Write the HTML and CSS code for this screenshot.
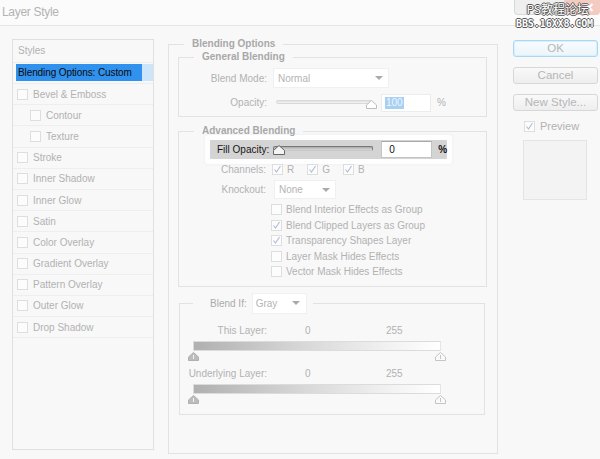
FILE: index.html
```html
<!DOCTYPE html>
<html>
<head>
<meta charset="utf-8">
<link rel="stylesheet" href="styles.css">
</head>
<body>
<div class="window">
  <div class="titlebar">
    <span class="title">Layer Style</span>
    <div class="winbtns">
      <span class="wb wb-help"></span>
      <span class="wb wb-close"><svg width="10" height="9" viewBox="0 0 10 9"><path d="M1.5 1 L8.5 8 M8.5 1 L1.5 8" stroke="#fff" stroke-width="2"/></svg></span>
    </div>
    <div class="watermark"><div class="wm1">PS教程论坛</div><div class="wm2">BBS.16XX8.COM</div></div>
  </div>
  <div class="dialog">
    <div class="styles-panel">
      <div class="list-head">Styles</div>
      <div class="list-sel"><span class="sel-blue">Blending Options: Custom</span><span class="sel-light"></span></div>
      <div class="list-row"><span class="cb"></span>Bevel &amp; Emboss</div>
      <div class="list-row sub"><span class="cb"></span>Contour</div>
      <div class="list-row sub"><span class="cb"></span>Texture</div>
      <div class="list-row"><span class="cb"></span>Stroke</div>
      <div class="list-row"><span class="cb"></span>Inner Shadow</div>
      <div class="list-row"><span class="cb"></span>Inner Glow</div>
      <div class="list-row"><span class="cb"></span>Satin</div>
      <div class="list-row"><span class="cb"></span>Color Overlay</div>
      <div class="list-row"><span class="cb"></span>Gradient Overlay</div>
      <div class="list-row"><span class="cb"></span>Pattern Overlay</div>
      <div class="list-row"><span class="cb"></span>Outer Glow</div>
      <div class="list-row"><span class="cb"></span>Drop Shadow</div>
    </div>

    <fieldset class="group main">
      <legend class="lg-main">Blending Options</legend>

      <fieldset class="group gen">
        <legend class="lg-sub">General Blending</legend>
        <div class="frow r-mode">
          <span class="flabel">Blend Mode:</span>
          <span class="select sel-mode">Normal<span class="arrow"></span></span>
        </div>
        <div class="frow r-opac">
          <span class="flabel">Opacity:</span>
          <span class="slider s-opac">
            <span class="track"></span>
            <svg class="thumb" width="11" height="9" viewBox="0 0 11 9"><path d="M5.5 0.5 L10.5 5 V8.5 H0.5 V5 Z" fill="#fff" stroke="#bdbdbd"/></svg>
          </span>
          <span class="input in-opac"><span class="hl">100</span></span>
          <span class="pct">%</span>
        </div>
      </fieldset>

      <fieldset class="group adv">
        <legend class="lg-sub">Advanced Blending</legend>
        <div class="fill-strip">
          <span class="fill-label">Fill Opacity:</span>
          <span class="slider s-fill">
            <span class="track dark"></span>
            <svg class="thumb" width="12" height="10" viewBox="0 0 12 10"><path d="M6 0.5 L11.5 5.5 V9.5 H0.5 V5.5 Z" fill="#f4f4f4" stroke="#666"/></svg>
          </span>
          <span class="input in-fill">0</span>
          <span class="pct dark">%</span>
        </div>
        <div class="frow r-chan">
          <span class="flabel">Channels:</span>
          <span class="cb on chan-first"><svg width="9" height="9" viewBox="0 0 9 9"><path d="M1.5 4.5 L3.5 7 L7.5 1" fill="none" stroke="#b1c0d6" stroke-width="1.2"/></svg></span><span class="chan-l">R</span>
          <span class="cb on"><svg width="9" height="9" viewBox="0 0 9 9"><path d="M1.5 4.5 L3.5 7 L7.5 1" fill="none" stroke="#b1c0d6" stroke-width="1.2"/></svg></span><span class="chan-l">G</span>
          <span class="cb on"><svg width="9" height="9" viewBox="0 0 9 9"><path d="M1.5 4.5 L3.5 7 L7.5 1" fill="none" stroke="#b1c0d6" stroke-width="1.2"/></svg></span><span class="chan-l">B</span>
        </div>
        <div class="frow r-knock">
          <span class="flabel">Knockout:</span>
          <span class="select sel-knock">None<span class="arrow"></span></span>
        </div>
        <div class="checklist">
          <div class="crow"><span class="cb"></span>Blend Interior Effects as Group</div>
          <div class="crow"><span class="cb on"><svg width="9" height="9" viewBox="0 0 9 9"><path d="M1.5 4.5 L3.5 7 L7.5 1" fill="none" stroke="#b1c0d6" stroke-width="1.2"/></svg></span>Blend Clipped Layers as Group</div>
          <div class="crow"><span class="cb on"><svg width="9" height="9" viewBox="0 0 9 9"><path d="M1.5 4.5 L3.5 7 L7.5 1" fill="none" stroke="#b1c0d6" stroke-width="1.2"/></svg></span>Transparency Shapes Layer</div>
          <div class="crow"><span class="cb"></span>Layer Mask Hides Effects</div>
          <div class="crow"><span class="cb"></span>Vector Mask Hides Effects</div>
        </div>
      </fieldset>

      <fieldset class="group blendif">
        <legend class="lg-if"><span>Blend If:</span><span class="select sel-gray">Gray<span class="arrow"></span></span></legend>
        <div class="brow first">
          <span class="blabel">This Layer:</span><span class="bv0">0</span><span>255</span>
        </div>
        <div class="gbar"></div>
        <div class="thumbs">
          <svg width="11" height="9" viewBox="0 0 11 9"><path d="M5.5 0.5 L10.5 5 V8.5 H0.5 V5 Z" fill="#bcbcbc" stroke="#b0b0b0"/><path d="M5.5 3 V7" stroke="#f2f2f2"/></svg>
          <svg width="11" height="9" viewBox="0 0 11 9"><path d="M5.5 0.5 L10.5 5 V8.5 H0.5 V5 Z" fill="#fafafa" stroke="#c4c4c4"/><path d="M5.5 3 V7" stroke="#c4c4c4"/></svg>
        </div>
        <div class="brow">
          <span class="blabel">Underlying Layer:</span><span class="bv0">0</span><span>255</span>
        </div>
        <div class="gbar"></div>
        <div class="thumbs">
          <svg width="11" height="9" viewBox="0 0 11 9"><path d="M5.5 0.5 L10.5 5 V8.5 H0.5 V5 Z" fill="#bcbcbc" stroke="#b0b0b0"/><path d="M5.5 3 V7" stroke="#f2f2f2"/></svg>
          <svg width="11" height="9" viewBox="0 0 11 9"><path d="M5.5 0.5 L10.5 5 V8.5 H0.5 V5 Z" fill="#fafafa" stroke="#c4c4c4"/><path d="M5.5 3 V7" stroke="#c4c4c4"/></svg>
        </div>
      </fieldset>
    </fieldset>

    <div class="actions">
      <div class="btn btn-ok">OK</div>
      <div class="btn">Cancel</div>
      <div class="btn">New Style...</div>
      <div class="preview-row"><span class="cb on"><svg width="9" height="9" viewBox="0 0 9 9"><path d="M1.5 4.5 L3.5 7 L7.5 1" fill="none" stroke="#b1c0d6" stroke-width="1.2"/></svg></span>Preview</div>
      <div class="swatch"></div>
    </div>
  </div>
</div>
</body>
</html>
```

FILE: styles.css
```css
html, body {
  margin: 0;
  padding: 0;
}
body {
  width: 600px;
  height: 459px;
  overflow: hidden;
  background: #f8f8f8;
  font-family: "Liberation Sans", Arial, sans-serif;
  font-size: 10px;
  color: #b2b2b2;
}
.window {
  width: 600px;
  height: 459px;
}

/* title bar */
.titlebar {
  position: relative;
  height: 25px;
  border-bottom: 1px solid #e6e6e6;
  background: #fbfbfb;
  display: flex;
  align-items: flex-start;
}
.title {
  font-size: 12px;
  color: #b3b3b3;
  padding: 5px 0 0 2px;
  letter-spacing: -0.3px;
}
.winbtns {
  margin-left: auto;
  display: flex;
}
.wb {
  height: 15px;
  box-sizing: border-box;
}
.wb-help {
  width: 51px;
  border: 1px solid #d8d8d8;
  border-top: none;
  border-radius: 0 0 0 4px;
  background: #efefef;
}
.wb-close {
  width: 35px;
  background: #f3cbc1;
  display: flex;
  align-items: center;
  justify-content: flex-end;
  padding-right: 6px;
  border-radius: 0 0 4px 0;
}
.watermark {
  position: absolute;
  top: 2px;
  right: 8px;
  text-align: right;
  color: #fff;
  text-shadow: 1px 0 0 #555, -1px 0 0 #555, 0 1px 0 #555, 0 -1px 0 #555;
}
.wm1 {
  font-family: "Noto Sans CJK SC", sans-serif;
  font-size: 12px;
  line-height: 14px;
  height: 14px;
  margin-right: 3px;
}
.wm2 {
  margin-top: 3px;
  font-family: "DejaVu Sans Mono", monospace;
  font-size: 10px;
  line-height: 9px;
  height: 9px;
  font-weight: bold;
  letter-spacing: -0.1px;
  margin-right: -1px;
}

/* dialog body */
.dialog {
  display: flex;
  align-items: flex-start;
}

/* styles list */
.styles-panel {
  box-sizing: border-box;
  width: 142px;
  height: 411px;
  margin: 13px 0 0 12px;
  border: 1px solid #e0e0e0;
  background: #f8f8f8;
}
.list-head {
  height: 23px;
  line-height: 22px;
  padding-left: 5px;
  border-bottom: 1px solid #eeeeee;
  box-sizing: border-box;
}
.list-sel {
  height: 21px;
  box-sizing: border-box;
  padding: 1px 0 2px 3px;
  display: flex;
  border-bottom: 1px solid #eeeeee;
}
.sel-blue {
  width: 126px;
  background: #3192ee;
  color: #0a0a0a;
  line-height: 18px;
  padding-left: 2px;
  box-sizing: border-box;
  white-space: nowrap;
  letter-spacing: -0.1px;
}
.sel-light {
  flex: 1;
  background: #cde5fb;
}
.list-row {
  height: 21.2px;
  box-sizing: border-box;
  border-bottom: 1px solid #eeeeee;
  display: flex;
  align-items: center;
  padding-left: 4px;
  white-space: nowrap;
}
.list-row.sub {
  padding-left: 17px;
}
.list-row .cb {
  margin-right: 5px;
}

/* checkboxes */
.cb {
  display: inline-flex;
  align-items: center;
  justify-content: center;
  width: 11px;
  height: 11px;
  box-sizing: border-box;
  border: 1px solid #dedede;
  background: #fcfcfc;
  flex: none;
}

/* fieldsets */
.group {
  margin: 0;
  padding: 0;
  border: 1px solid #e2e2e2;
  min-width: 0;
  box-sizing: border-box;
}
.group legend {
  line-height: 12px;
  padding: 0 8px;
}
.lg-main, .lg-sub {
  font-weight: bold;
  color: #a8a8a8;
}
.main {
  width: 330px;
  height: 416px;
  margin: 12px 0 0 14px;
  padding: 0 10px 0 9px;
}
.lg-main {
  margin-left: 6px;
}
.lg-sub {
  margin-left: 15px;
}
.gen {
  margin-top: 1px;
  padding: 5px 0 4px 0;
}
.frow {
  display: flex;
  align-items: center;
}
.flabel {
  width: 88px;
  text-align: right;
  flex: none;
  white-space: nowrap;
}
.r-mode {
  height: 20px;
}
.select {
  position: relative;
  display: flex;
  align-items: center;
  box-sizing: border-box;
  background: #fff;
  border: 1px solid #f0f0f0;
  padding-left: 4px;
  color: #b4b4b4;
}
.arrow {
  position: absolute;
  top: 50%;
  margin-top: -2px;
  width: 0;
  height: 0;
  border-left: 4px solid transparent;
  border-right: 4px solid transparent;
  border-top: 4px solid #aaaaaa;
}
.sel-mode {
  margin-left: 6px;
  width: 116px;
  height: 20px;
}
.sel-mode .arrow { right: 5px; }
.r-opac {
  margin-top: 5px;
  height: 19px;
}
.slider {
  position: relative;
  flex: none;
}
.track {
  position: absolute;
  left: 0;
  right: 0;
  top: 3px;
  height: 4px;
  border-radius: 2px;
  background: linear-gradient(#e0e0e0, #f4f4f4);
  border: 1px solid #d9d9d9;
  box-sizing: border-box;
}
.track.dark {
  height: 5px;
  top: 2px;
  background: linear-gradient(#aaaaaa, #d9d9d9);
  border: 1px solid #777;
  border-bottom-color: #c8c8c8;
}
.thumb {
  position: absolute;
  top: 3px;
}
.s-opac {
  margin-left: 9px;
  width: 96px;
  height: 12px;
}
.s-opac .thumb { right: -5px; }
.input {
  box-sizing: border-box;
  background: #fff;
  border: 1px solid #ececec;
  display: flex;
  align-items: center;
  padding-left: 5px;
  flex: none;
}
.in-opac {
  margin-left: 9px;
  width: 50px;
  height: 18px;
  padding-left: 3px;
}
.hl {
  background: #a9cff3;
  color: #eef6fd;
  line-height: 12px;
  padding: 0 1px;
}
.pct {
  margin-left: 6px;
}
.pct.dark {
  color: #111;
  font-weight: bold;
}

/* advanced */
.adv {
  margin-top: 8px;
  padding: 0 0 6px 0;
}
.fill-strip {
  margin: 3px 0 0 31px;
  width: 237px;
  height: 19px;
  box-sizing: border-box;
  background: #d4d4d4;
  box-shadow: 0 0 0 5px #fefefe, 0 0 3px 6px #f2f2f2;
  border-radius: 1px;
  display: flex;
  align-items: center;
  padding-left: 7px;
}
.fill-label {
  color: #151515;
  white-space: nowrap;
}
.s-fill {
  margin-left: 4px;
  width: 100px;
  height: 12px;
}
.s-fill .thumb { left: 0; top: 1px; }
.in-fill {
  margin-left: 8px;
  width: 51px;
  height: 17px;
  border: 1px solid #c4c4c4;
  border-top-color: #a8a8a8;
  padding-left: 7px;
  color: #111;
}
.r-chan {
  margin-top: 2px;
  height: 16px;
}
.r-chan .flabel { width: 87px; }
.chan-first { margin-left: 6px; }
.chan-l {
  margin: 0 13px 0 4px;
}
.r-knock {
  margin-top: 3px;
  height: 19px;
}
.r-knock .flabel { width: 87px; }
.sel-knock {
  margin-left: 8px;
  width: 62px;
  height: 19px;
}
.sel-knock .arrow { right: 5px; }
.checklist {
  margin-top: 3px;
  padding-left: 92px;
}
.crow {
  height: 15.5px;
  display: flex;
  align-items: center;
  white-space: nowrap;
}
.crow .cb {
  margin-right: 4px;
}

/* blend if */
.blendif {
  margin: 6px 0 0 1px;
  width: 306px;
  padding: 0 0 9px 0;
}
.lg-if {
  display: flex;
  align-items: center;
  margin-left: 13px;
  color: #ababab;
}
.group .lg-if {
  padding: 0 6px 0 17px;
  line-height: 21px;
}
.sel-gray {
  margin-left: 5px;
  width: 55px;
  height: 21px;
  padding-left: 3px;
}
.sel-gray .arrow { right: 6px; }
.brow {
  display: flex;
  height: 12px;
  line-height: 12px;
  margin-top: 6px;
  white-space: nowrap;
}
.brow.first {
  margin-top: 11px;
}
.blabel {
  width: 87px;
  text-align: right;
  flex: none;
}
.bv0 {
  width: 81px;
  padding-left: 38px;
  flex: none;
}
.gbar {
  margin: 4px 0 0 13px;
  width: 248px;
  height: 10px;
  box-sizing: border-box;
  border: 1px solid #dcdcdc;
  border-right-color: #e6e6e6;
  background: linear-gradient(to right, #b0b0b0, #d8d8d8 45%, #f2f2f2 80%, #ffffff);
}
.thumbs {
  margin: 1px 0 0 8px;
  width: 258px;
  height: 10px;
  display: flex;
  justify-content: space-between;
}

/* actions */
.actions {
  margin: 14px 0 0 15px;
  width: 85px;
  display: flex;
  flex-direction: column;
}
.btn {
  height: 17px;
  box-sizing: border-box;
  border: 1px solid #d7d7d7;
  border-radius: 3px;
  background: linear-gradient(#f9f9f9, #eeeeee);
  font-size: 11.5px;
  line-height: 15px;
  text-align: center;
  color: #b6b6b6;
  margin-bottom: 10px;
}
.btn-ok {
  border-color: #a8d8f2;
  box-shadow: inset 0 0 0 1px #d9effb;
  background: linear-gradient(#f6fbfe, #edf5fa);
}
.preview-row {
  margin: -1px 0 0 11px;
  height: 12px;
  display: flex;
  align-items: center;
  font-size: 11px;
}
.preview-row .cb {
  margin-right: 5px;
}
.swatch {
  margin: 8px 0 0 10px;
  width: 64px;
  height: 60px;
  box-sizing: border-box;
  border: 1px solid #e4e4e4;
  background: #f3f3f3;
}
```
